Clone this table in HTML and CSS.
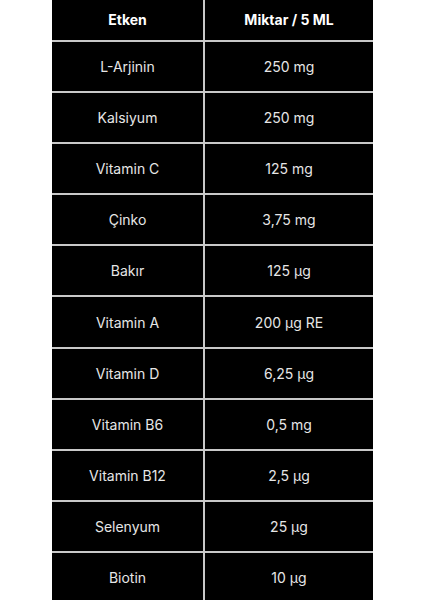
FILE: index.html
```html
<!DOCTYPE html>
<html lang="tr">
<head>
<meta charset="utf-8">
<link rel="stylesheet" href="styles.css">
</head>
<body>
<div class="table">
  <div class="cell head">Etken</div><div class="cell head">Miktar / 5 ML</div>
  <div class="cell">L-Arjinin</div><div class="cell">250 mg</div>
  <div class="cell">Kalsiyum</div><div class="cell">250 mg</div>
  <div class="cell">Vitamin C</div><div class="cell">125 mg</div>
  <div class="cell">Çinko</div><div class="cell">3,75 mg</div>
  <div class="cell">Bakır</div><div class="cell">125 µg</div>
  <div class="cell">Vitamin A</div><div class="cell">200 µg RE</div>
  <div class="cell">Vitamin D</div><div class="cell">6,25 µg</div>
  <div class="cell">Vitamin B6</div><div class="cell">0,5 mg</div>
  <div class="cell">Vitamin B12</div><div class="cell">2,5 µg</div>
  <div class="cell">Selenyum</div><div class="cell">25 µg</div>
  <div class="cell">Biotin</div><div class="cell">10 µg</div>
</div>
</body>
</html>
```
FILE: styles.css
```css
html, body {
  margin: 0;
  padding: 0;
  background: #ffffff;
}
body {
  font-family: Inter, "Liberation Sans", sans-serif;
  height: 600px;
  overflow: hidden;
}
.table {
  margin-left: 52px;
  width: 321px;
  display: grid;
  grid-template-columns: 151px 168px;
  grid-auto-rows: 49.2px;
  grid-template-rows: 39.5px;
  gap: 2px;
  background: #c9c9c9;
}
.cell {
  background: #000000;
  color: #e6e6e6;
  font-size: 14px;
  display: flex;
  align-items: center;
  justify-content: center;
}
.head {
  color: #ffffff;
  font-weight: 700;
}
```
